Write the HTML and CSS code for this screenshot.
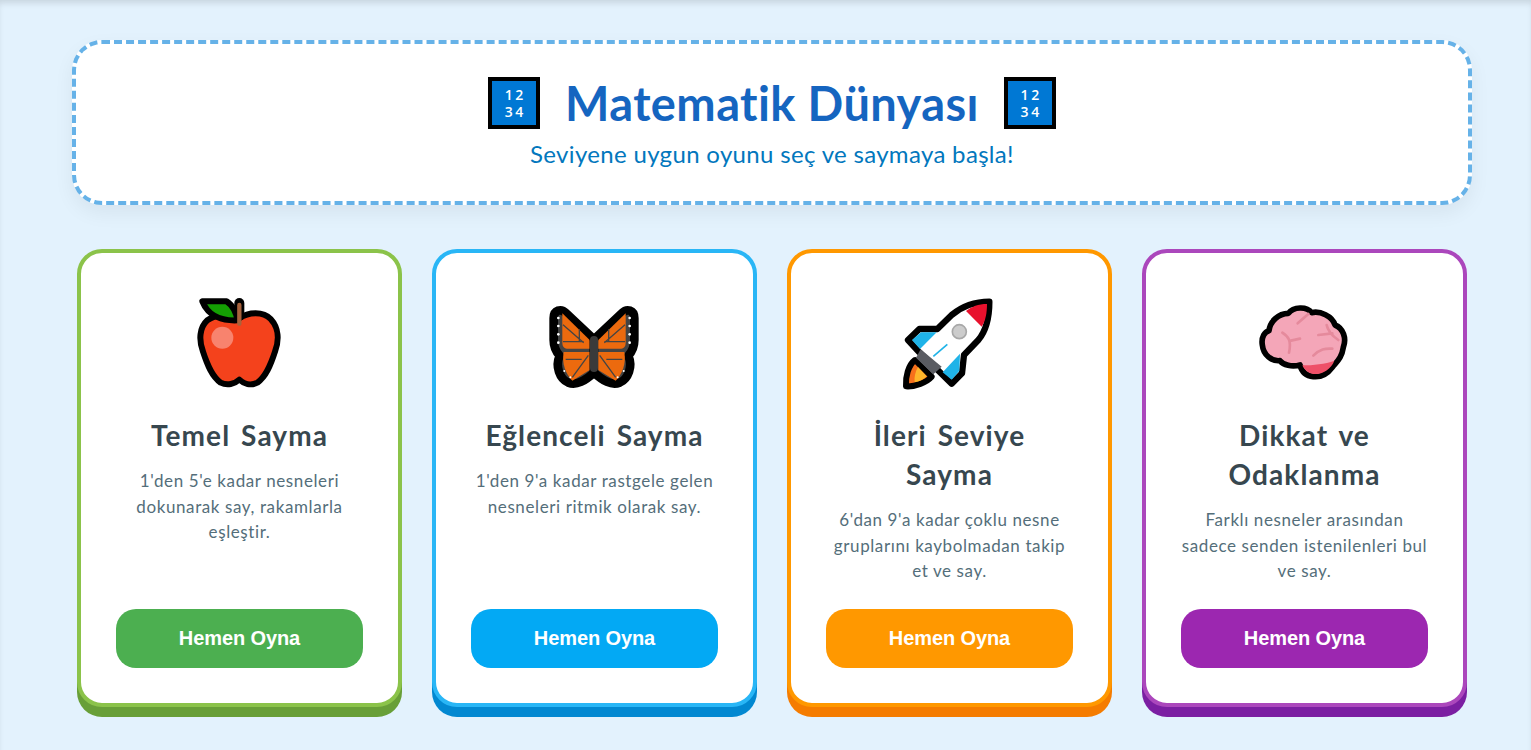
FILE: index.html
```html
<!DOCTYPE html>
<html lang="tr">
<head>
    <meta charset="UTF-8">
    <meta name="viewport" content="width=device-width, initial-scale=1.0">
    <title>Matematik Dünyası</title>
    <link rel="stylesheet" href="styles.css">
</head>
<body>
    <div class="page">
        <header class="hero">
            <h1 class="hero-title">
                <span class="keycap"><span>1 2</span><span>3 4</span></span>
                <span>Matematik Dünyası</span>
                <span class="keycap"><span>1 2</span><span>3 4</span></span>
            </h1>
            <p class="hero-sub">Seviyene uygun oyunu seç ve saymaya başla!</p>
        </header>

        <main class="cards">
            <section class="card card-green">
                <svg class="card-icon" viewBox="0 0 360 345">
                    <path d="M178 100C205 80 250 78 272 102C296 128 298 165 285 200C272 240 258 275 232 293C212 303 192 297 178 284C164 297 142 303 122 293C96 275 82 240 69 200C56 165 58 128 82 106C108 88 150 86 178 100Z" fill="#f4421c" stroke="#000" stroke-width="18" stroke-linejoin="round"/>
                    <path d="M178 54V92" stroke="#000" stroke-width="30" stroke-linecap="round"/>
                    <path d="M67 49H140C158 60 170 85 172 106C130 108 85 95 67 49Z" fill="#14a003" stroke="#000" stroke-width="18" stroke-linejoin="round"/>
                    <path d="M178 60V116" stroke="#a8623c" stroke-width="13" stroke-linecap="round"/>
                    <circle cx="127" cy="158" r="33" fill="#f8836e"/>
                </svg>
                <h2 class="card-title">Temel Sayma</h2>
                <p class="card-text">1'den 5'e kadar nesneleri dokunarak say, rakamlarla eşleştir.</p>
                <a class="play-btn" href="#">Hemen Oyna</a>
            </section>

            <section class="card card-blue">
                <svg class="card-icon" viewBox="0 -15 360 345">
                    <g id="wing">
                        <path d="M56 85C56 60 78 54 94 70L177 148V248C150 272 125 288 100 278C74 266 60 230 74 197C60 182 56 165 56 150Z" fill="#444" stroke="#000" stroke-width="26" stroke-linejoin="round"/>
                        <path d="M82 70L164 150V176H100C88 176 82 170 82 158Z" fill="#ec6a0e"/>
                        <path d="M86 186H164V240L112 272C92 252 80 222 86 186Z" fill="#ec6a0e"/>
                        <path d="M84 104L146 158M133 118V154M84 155H146M160 196L112 262M92 208L140 208" stroke="#444" stroke-width="4" fill="none"/>
                        <g fill="#fff"><circle cx="70" cy="84" r="4"/><circle cx="70" cy="108" r="4"/><circle cx="70" cy="133" r="4"/><circle cx="70" cy="158" r="4"/><circle cx="88" cy="243" r="3"/><circle cx="106" cy="262" r="3"/></g>
                    </g>
                    <use href="#wing" transform="matrix(-1 0 0 1 354 0)"/>
                    <rect x="165" y="138" width="24" height="108" rx="12" fill="#3a3a3a"/>
                </svg>
                <h2 class="card-title">Eğlenceli Sayma</h2>
                <p class="card-text">1'den 9'a kadar rastgele gelen nesneleri ritmik olarak say.</p>
                <a class="play-btn" href="#">Hemen Oyna</a>
            </section>

            <section class="card card-orange">
                <svg class="card-icon" viewBox="0 0 360 345">
                    <path d="M75 225L125 275C110 292 75 306 48 304C46 275 55 240 75 225Z" fill="#f6701c" stroke="#000" stroke-width="18" stroke-linejoin="round"/>
                    <path d="M84 246L110 274C100 284 88 290 74 292C72 276 76 260 84 246Z" fill="#fdb52a"/>
                    <path d="M298 50C255 50 215 65 185 90L142 132H88L54 165L88 202L150 262L185 296L216 265L222 210L265 165C290 135 298 95 298 50Z" fill="#fff" stroke="#000" stroke-width="19" stroke-linejoin="round"/>
                    <path d="M66 165L93 142H140L90 192Z" fill="#1fb3e8"/>
                    <path d="M158 262L210 206L208 258L185 284Z" fill="#1fb3e8"/>
                    <path d="M291 57C265 57 245 65 228 78L275 125C288 105 291 80 291 57Z" fill="#e8112d"/>
                    <path d="M92 193L155 245L130 268L78 218Z" fill="#5a5c62"/>
                    <path d="M130 214L172 178" stroke="#1fb3e8" stroke-width="5"/>
                    <circle cx="208" cy="140" r="21" fill="#ccc" stroke="#a8a8a8" stroke-width="5"/>
                </svg>
                <h2 class="card-title">İleri Seviye Sayma</h2>
                <p class="card-text">6'dan 9'a kadar çoklu nesne gruplarını kaybolmadan takip et ve say.</p>
                <a class="play-btn" href="#">Hemen Oyna</a>
            </section>

            <section class="card card-purple">
                <svg class="card-icon" viewBox="0 -15 360 345">
                    <path d="M52 165C48 140 60 125 72 122C75 95 100 70 130 70C145 50 185 48 200 68C225 62 262 78 270 105C295 115 305 145 295 172C290 205 275 215 262 232C245 255 225 262 205 260C185 258 170 245 165 225C140 232 115 225 105 212C80 215 55 195 52 165Z" fill="#f4a6b8" stroke="#000" stroke-width="17" stroke-linejoin="round"/>
                    <path d="M172 226C205 226 240 222 268 212C258 238 232 254 205 252C190 250 178 240 172 226Z" fill="#ee5068"/>
                    <path d="M158 100L190 72M112 128C130 140 140 150 132 188M138 152L165 146M220 135L262 130M245 105C248 120 258 135 280 150M205 197C225 177 240 175 262 176" fill="none" stroke="#e58a9c" stroke-width="8" stroke-linecap="round"/>
                </svg>
                <h2 class="card-title">Dikkat ve Odaklanma</h2>
                <p class="card-text">Farklı nesneler arasından sadece senden istenilenleri bul ve say.</p>
                <a class="play-btn" href="#">Hemen Oyna</a>
            </section>
        </main>
    </div>
</body>
</html>
```

FILE: styles.css
```css
* {
    box-sizing: border-box;
}

body {
    margin: 0;
    background-color: #e3f2fd;
    font-family: "Comic Sans MS", Lato, sans-serif;
    font-variant-ligatures: none;
}

.page {
    height: 750px;
    overflow: hidden;
    padding: 40px 59px 0 72px;
    box-shadow: inset 0 5px 6px -2px rgba(0, 0, 0, 0.12);
}

.hero {
    height: 165px;
    padding-top: 33px;
    background: #fff;
    border: 4px dashed #66b2e8;
    border-radius: 30px;
    box-shadow: 0 8px 20px rgba(0, 0, 0, 0.06);
    text-align: center;
}

.hero-title {
    display: flex;
    justify-content: center;
    align-items: center;
    gap: 25px;
    margin: 0;
    height: 52px;
    color: #1565c0;
    font-size: 47px;
    letter-spacing: 0.4px;
}

.keycap {
    display: flex;
    flex-direction: column;
    justify-content: center;
    width: 52px;
    height: 52px;
    background: #0078d4;
    border: 4px solid #000;
    color: #fff;
    font-family: "Open Sans", sans-serif;
    font-size: 14px;
    font-weight: 600;
    line-height: 17px;
    letter-spacing: 0;
    word-spacing: -1px;
}

.hero-sub {
    margin: 10px 0 0;
    color: #0277bd;
    font-size: 24px;
    letter-spacing: 0.33px;
}

.cards {
    display: grid;
    grid-template-columns: repeat(4, 325px);
    gap: 30px;
    margin-top: 44px;
    padding-left: 5px;
}

.card {
    display: flex;
    flex-direction: column;
    align-items: center;
    height: 458px;
    padding: 32px 35px 35px;
    background: #fff;
    border: 4px solid;
    border-radius: 25px;
    text-align: center;
}

.card-icon {
    flex: none;
    width: 120px;
    height: 115px;
    margin-bottom: 16px;
}

.card-title {
    margin: 0;
    color: #37474f;
    font-size: 28px;
    line-height: 39px;
    letter-spacing: 1.1px;
    word-spacing: 3px;
}

.card-text {
    margin: 13px 0 0;
    color: #546e7a;
    font-size: 17px;
    line-height: 25.5px;
    letter-spacing: 0.6px;
}

.play-btn {
    display: block;
    width: 100%;
    height: 59px;
    margin-top: auto;
    border-radius: 20px;
    color: #fff;
    font-family: "Liberation Sans", Arial, sans-serif;
    font-size: 20px;
    font-weight: 700;
    line-height: 59px;
    letter-spacing: -0.1px;
    text-decoration: none;
}

.card-green {
    border-color: #8bc34a;
    box-shadow: 0 10px 0 #689f38;
}

.card-green .play-btn {
    background: #4caf50;
}

.card-blue {
    border-color: #29b6f6;
    box-shadow: 0 10px 0 #0288d1;
}

.card-blue .play-btn {
    background: #03a9f4;
}

.card-orange {
    border-color: #ff9800;
    box-shadow: 0 10px 0 #f57c00;
}

.card-orange .play-btn {
    background: #ff9800;
}

.card-purple {
    border-color: #ab47bc;
    box-shadow: 0 10px 0 #7b1fa2;
}

.card-purple .play-btn {
    background: #9c27b0;
}
```
